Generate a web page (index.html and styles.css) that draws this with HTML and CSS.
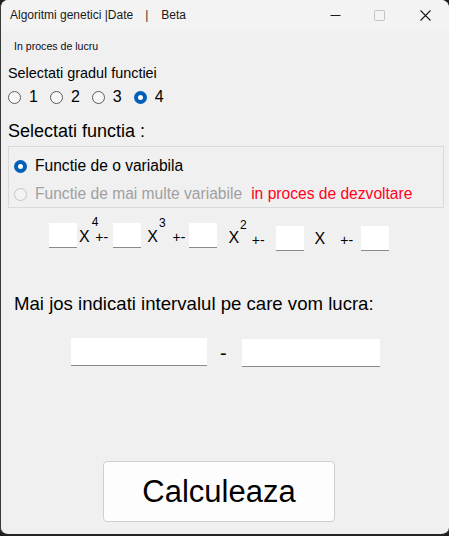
FILE: index.html
```html
<!DOCTYPE html>
<html>
<head>
<meta charset="utf-8">
<link rel="stylesheet" href="styles.css">
</head>
<body>
<div class="window">
  <div class="titlebar">
    <span class="title">Algoritmi genetici |Date</span>
    <span class="title sep">|</span>
    <span class="title beta">Beta</span>
    <div class="controls">
      <svg class="ctl ctl-min" width="11" height="11" viewBox="0 0 11 11"><path d="M0.5 5.5H10.5" stroke="#1a1a1a" stroke-width="1"/></svg>
      <svg class="ctl ctl-max" width="11" height="11" viewBox="0 0 11 11"><rect x="0.5" y="0.5" width="10" height="10" rx="1" fill="none" stroke="#c4c4c4" stroke-width="1"/></svg>
      <svg class="ctl ctl-close" width="11" height="11" viewBox="0 0 11 11"><path d="M0.5 0.5L10.5 10.5M10.5 0.5L0.5 10.5" stroke="#1a1a1a" stroke-width="1.1"/></svg>
    </div>
  </div>
  <div class="content">
    <div class="status">In proces de lucru</div>
    <div class="label-sm">Selectati gradul functiei</div>
    <div class="degree-row">
      <span class="opt"><span class="radio"></span><span class="digit">1</span></span>
      <span class="opt"><span class="radio"></span><span class="digit">2</span></span>
      <span class="opt"><span class="radio"></span><span class="digit">3</span></span>
      <span class="opt"><span class="radio checked"></span><span class="digit">4</span></span>
    </div>
    <div class="label-lg">Selectati functia :</div>
    <div class="group">
      <div class="grow"><span class="radio checked"></span><span class="gtext">Functie de o variabila</span></div>
      <div class="grow second"><span class="radio disabled"></span><span class="gtext gray">Functie de mai multe variabile</span><span class="gtext red">in proces de dezvoltare</span></div>
    </div>
    <div class="poly">
      <span class="box b1"></span>
      <span class="x x1">X</span><span class="exp e4">4</span><span class="pm pm1">+-</span>
      <span class="box b2"></span>
      <span class="x x2">X</span><span class="exp e3">3</span><span class="pm pm2">+-</span>
      <span class="box b3"></span>
      <span class="x x3">X</span><span class="exp e2">2</span><span class="pm pm3">+-</span>
      <span class="box b4"></span>
      <span class="x x4">X</span><span class="pm pm4">+-</span>
      <span class="box b5"></span>
    </div>
    <div class="interval-label">Mai jos indicati intervalul pe care vom lucra:</div>
    <div class="interval">
      <span class="field f1"></span>
      <span class="dash">-</span>
      <span class="field f2"></span>
    </div>
    <div class="actions">
      <button class="calc">Calculeaza</button>
    </div>
  </div>
</div>
</body>
</html>
```
FILE: styles.css
```css
html, body {
  margin: 0;
  padding: 0;
  background: #1e1e1e;
}
body {
  width: 449px;
  height: 536px;
  overflow: hidden;
}
.window {
  box-sizing: border-box;
  width: 449px;
  height: 536px;
  background: #f0f0f0;
  border-left: 1px solid #3a3a3a;
  border-bottom: 2px solid #242424;
  border-radius: 8px;
  overflow: hidden;
  font-family: "Liberation Sans", Arial, sans-serif;
  color: #000;
}
.titlebar {
  height: 31px;
  background: #f3f3f3;
  display: flex;
  align-items: center;
}
.title {
  font-family: "Liberation Sans", Arial, sans-serif;
  font-size: 12px;
  color: #1a1a1a;
  line-height: 31px;
}
.title:first-child { margin-left: 9px; }
.sep { margin-left: 12px; color: #333; }
.beta { margin-left: 13px; }
.controls {
  margin-left: auto;
  display: flex;
  align-items: center;
  height: 31px;
}
.ctl { display: block; }
.ctl-min { margin-right: 33px; }
.ctl-max { margin-right: 35px; }
.ctl-close { margin-right: 18px; }

.content {
  display: flex;
  flex-direction: column;
  align-items: flex-start;
}
.status {
  margin: 8px 0 0 13px;
  font-size: 10.6px;
  line-height: 14px;
  color: #0a0a1a;
}
.label-sm {
  margin: 12px 0 0 7px;
  font-size: 14.4px;
  line-height: 16px;
}
.degree-row {
  margin: 6px 0 0 7px;
  height: 20px;
  display: flex;
  align-items: center;
}
.opt {
  display: flex;
  align-items: center;
  margin-right: 12px;
}
.radio {
  box-sizing: border-box;
  width: 13px;
  height: 13px;
  border-radius: 50%;
  border: 1px solid #5c5c5c;
  background: #f7f7f7;
  display: flex;
  align-items: center;
  justify-content: center;
  flex: none;
}
.radio.checked {
  border: none;
  background: #005fb8;
}
.radio.checked::after {
  content: "";
  width: 5px;
  height: 5px;
  border-radius: 50%;
  background: #fff;
}
.radio.disabled {
  border-color: #c6c6c6;
  background: #f3f3f3;
}
.digit {
  margin-left: 8px;
  font-size: 16px;
  line-height: 20px;
}
.label-lg {
  margin: 12px 0 0 7px;
  font-size: 18px;
  line-height: 24px;
}
.group {
  box-sizing: border-box;
  margin: 3px 0 0 7px;
  width: 436px;
  border: 1px solid #dadada;
  padding: 7px 0 1px 5px;
}
.grow {
  display: flex;
  align-items: center;
  height: 24px;
}
.grow.second { margin-top: 4px; }
.gtext {
  margin-left: 8px;
  font-size: 15.6px;
  line-height: 24px;
}
.gray { color: #a0a0a0; }
.red { color: #ff0022; margin-left: 9px; }

.poly {
  margin-top: 5px;
  height: 40px;
  display: flex;
  align-items: flex-start;
}
.box {
  box-sizing: border-box;
  width: 28px;
  height: 25px;
  background: #fff;
  border-bottom: 1px solid #8a8a8a;
  flex: none;
}
.x {
  font-size: 16px;
  line-height: 16px;
}
.exp {
  font-size: 12px;
  line-height: 12px;
}
.pm {
  font-size: 14px;
  line-height: 14px;
}
.b1 { margin-left: 48px; margin-top: 10px; }
.x1 { margin-left: 2px; margin-top: 16px; }
.e4 { margin-left: 2px; margin-top: 3px; }
.pm1 { margin-left: -3px; margin-top: 17px; }
.b2 { margin-left: 5px; margin-top: 10px; }
.x2 { margin-left: 6px; margin-top: 16px; }
.e3 { margin-left: 1px; margin-top: 4px; }
.pm2 { margin-left: 7px; margin-top: 17px; }
.b3 { margin-left: 4px; margin-top: 10px; }
.x3 { margin-left: 11px; margin-top: 17px; }
.e2 { margin-left: 1px; margin-top: 6px; }
.pm3 { margin-left: 5px; margin-top: 20px; }
.b4 { margin-left: 11px; margin-top: 13px; }
.x4 { margin-left: 11px; margin-top: 18px; }
.pm4 { margin-left: 15px; margin-top: 20px; }
.b5 { margin-left: 8px; margin-top: 13px; }

.interval-label {
  margin: 40px 0 0 13px;
  font-size: 18.6px;
  line-height: 22px;
}
.interval {
  margin-top: 23px;
  display: flex;
  align-items: flex-start;
}
.field {
  box-sizing: border-box;
  height: 28px;
  background: #fff;
  border-bottom: 1px solid #8a8a8a;
}
.f1 { margin-left: 70px; width: 136px; }
.dash {
  margin-left: 13px;
  font-size: 20px;
  line-height: 30px;
}
.f2 { margin-left: 15px; margin-top: 1px; width: 138px; }

.actions {
  margin-top: 93px;
  margin-left: 102px;
}
.calc {
  box-sizing: border-box;
  width: 232px;
  height: 61px;
  background: #fdfdfd;
  border: 1px solid #cfcfcf;
  border-radius: 4px;
  font-family: "Liberation Sans", Arial, sans-serif;
  font-size: 31px;
  color: #000;
  padding: 0;
}
```
